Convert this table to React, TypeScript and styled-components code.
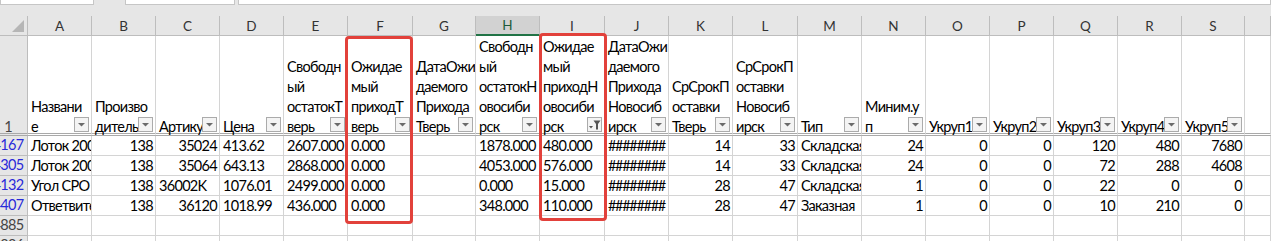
import React from "react";
import styled, { createGlobalStyle } from "styled-components";

const GlobalStyle = createGlobalStyle`
  html, body { margin: 0; padding: 0; background: #ffffff; overflow: hidden; }
  body { font-family: Lato, "Noto Sans", sans-serif; }
`;

const COL_WIDTHS = [64, 64, 64, 64, 64, 65, 63, 64, 65, 64, 64, 65, 64, 64, 64, 64, 64, 64, 63];
const LETTERS = "ABCDEFGHIJKLMNOPQRS".split("");
const GRID_TEMPLATE = `28px ${COL_WIDTHS.map((w) => `${w}px`).join(" ")} 1fr`;

const GRID = "#d4d4d4";
const HEAD_LINE = "#bdbdbd";
const HEAD_BG = "#e6e6e6";

const Page = styled.div`
  position: relative;
  width: 1271px;
  height: 241px;
  overflow: hidden;
  background: #ffffff;
`;

const TopBand = styled.div`
  display: flex;
  align-items: flex-start;
  height: 16px;
  background: ${HEAD_BG};
`;

const BarBox = styled.div<{ $w?: number; $gap?: number }>`
  box-sizing: border-box;
  height: 5px;
  width: ${(p) => (p.$w ? `${p.$w}px` : "auto")};
  flex: ${(p) => (p.$w ? "0 0 auto" : "1 1 auto")};
  margin-left: ${(p) => p.$gap ?? 0}px;
  background: #ffffff;
  border: 1px solid #c6c6c6;
  border-top: none;
`;

const Sheet = styled.div`
  display: grid;
  grid-template-columns: ${GRID_TEMPLATE};
  grid-template-rows: 20px 100px;
  grid-auto-rows: 20px;
  font-size: 14.5px;
  letter-spacing: -0.7px;
  color: #000000;
`;

const Corner = styled.div`
  box-sizing: border-box;
  background: ${HEAD_BG};
  border-right: 1px solid ${HEAD_LINE};
  border-bottom: 1px solid ${HEAD_LINE};
  display: flex;
  align-items: flex-end;
  justify-content: flex-end;
  padding: 0 3px 3px 0;
`;

const ColHead = styled.div<{ $active?: boolean }>`
  box-sizing: border-box;
  background: ${(p) => (p.$active ? "#d2d2d2" : HEAD_BG)};
  border-right: 1px solid ${HEAD_LINE};
  border-bottom: ${(p) => (p.$active ? "2px solid #217346" : `1px solid ${HEAD_LINE}`)};
  display: flex;
  align-items: center;
  justify-content: center;
  font-size: 13.5px;
  letter-spacing: 0;
  line-height: 18px;
  color: ${(p) => (p.$active ? "#1f5c3a" : "#333333")};
`;

const RowHead = styled.div<{ $tall?: boolean; $blue?: boolean }>`
  box-sizing: border-box;
  background: ${HEAD_BG};
  border-right: 1px solid ${HEAD_LINE};
  border-bottom: ${(p) => (p.$tall ? `3px double #a9a9a9` : `1px solid ${HEAD_LINE}`)};
  display: flex;
  justify-content: flex-end;
  align-items: flex-end;
  overflow-x: clip;
  line-height: 20px;
  color: ${(p) => (p.$blue ? "#2929d9" : "#444444")};
`;

const RowNum = styled.span<{ $tall?: boolean }>`
  flex: 0 0 38px;
  text-align: center;
  white-space: nowrap;
  margin-bottom: ${(p) => (p.$tall ? "-4px" : "0")};
`;

const HeadCell = styled.div`
  position: relative;
  box-sizing: border-box;
  border-right: 1px solid ${GRID};
  border-bottom: 3px double #a9a9a9;
  display: flex;
  flex-direction: column;
  justify-content: flex-end;
  padding: 0 0 0 3px;
  overflow-x: clip;
`;

const HeadText = styled.div`
  margin-bottom: -4px;
  line-height: 20px;
  white-space: nowrap;
`;

const FilterBtn = styled.div`
  position: absolute;
  right: 2px;
  bottom: 1px;
  box-sizing: border-box;
  width: 15px;
  height: 15px;
  border: 1px solid #ababab;
  background: #f4f4f4;
  display: flex;
  align-items: center;
  justify-content: center;
`;

const Cell = styled.div<{ $right?: boolean }>`
  box-sizing: border-box;
  border-right: 1px solid ${GRID};
  border-bottom: 1px solid ${GRID};
  padding: 0 2px 0 3px;
  line-height: 20px;
  white-space: nowrap;
  overflow: hidden;
  text-align: ${(p) => (p.$right ? "right" : "left")};
`;

const Hashes = styled.span`
  letter-spacing: -1.3px;
`;

const Highlight = styled.div<{ $left: number; $top: number }>`
  position: absolute;
  left: ${(p) => p.$left}px;
  top: ${(p) => p.$top}px;
  width: 68px;
  height: 188px;
  box-sizing: border-box;
  border: 3px solid #e2413b;
  border-radius: 4px;
  pointer-events: none;
`;

type Header = { lines: string[]; active?: boolean };

const HEADERS: Header[] = [
  { lines: ["Названи", "е"] },
  { lines: ["Произво", "дитель"] },
  { lines: ["Артикул"] },
  { lines: ["Цена"] },
  { lines: ["Свободн", "ый", "остатокТ", "верь"] },
  { lines: ["Ожидае", "мый", "приходТ", "верь"] },
  { lines: ["ДатаОжи", "даемого", "Прихода", "Тверь"] },
  { lines: ["Свободн", "ый", "остатокН", "овосиби", "рск"] },
  { lines: ["Ожидае", "мый", "приходН", "овосиби", "рск"], active: true },
  { lines: ["ДатаОжи", "даемого", "Прихода", "Новосиб", "ирск"] },
  { lines: ["СрСрокП", "оставки", "Тверь"] },
  { lines: ["СрСрокП", "оставки", "Новосиб", "ирск"] },
  { lines: ["Тип"] },
  { lines: ["Миним.у", "п"] },
  { lines: ["Укруп1"] },
  { lines: ["Укруп2"] },
  { lines: ["Укруп3"] },
  { lines: ["Укруп4"] },
  { lines: ["Укруп5"] },
];

type Val = string | number | null;
type Row = { num: string; blue: boolean; cells: Val[] };

const HASH = "#HASH#";

const ROWS: Row[] = [
  {
    num: "4167",
    blue: true,
    cells: ["Лоток 200х50", 138, 35024, "413.62", "2607.000", "0.000", null, "1878.000", "480.000", HASH, 14, 33, "Складская", 24, 0, 0, 120, 480, 7680],
  },
  {
    num: "4305",
    blue: true,
    cells: ["Лоток 200х80", 138, 35064, "643.13", "2868.000", "0.000", null, "4053.000", "576.000", HASH, 14, 33, "Складская", 24, 0, 0, 72, 288, 4608],
  },
  {
    num: "4132",
    blue: true,
    cells: ["Угол СРО", 138, "36002K", "1076.01", "2499.000", "0.000", null, "0.000", "15.000", HASH, 28, 47, "Складская", 1, 0, 0, 22, 0, 0],
  },
  {
    num: "4407",
    blue: true,
    cells: ["Ответвитель", 138, 36120, "1018.99", "436.000", "0.000", null, "348.000", "110.000", HASH, 28, 47, "Заказная", 1, 0, 0, 10, 210, 0],
  },
  { num: "4885", blue: false, cells: Array(19).fill(null) },
  { num: "4886", blue: false, cells: Array(19).fill(null) },
];

const SelectAll = () => (
  <svg width="12" height="12" viewBox="0 0 12 12">
    <polygon points="12,0 12,12 0,12" fill="#b6b6b6" />
  </svg>
);

const DropArrow = () => (
  <svg width="13" height="13" viewBox="0 0 13 13">
    <polygon points="3,5 10,5 6.5,8.5" fill="#6b6b6b" />
  </svg>
);

const FilterActive = () => (
  <svg width="13" height="13" viewBox="0 0 13 13">
    <polygon points="1,8 5,8 3,10.5" fill="#555555" />
    <polygon points="5.5,2.5 12.5,2.5 10,6 10,11.5 8,11.5 8,6" fill="#555555" />
  </svg>
);

export default function App() {
  return (
    <>
      <GlobalStyle />
      <Page>
        <TopBand>
          <BarBox $w={94} />
          <BarBox $w={110} $gap={31} />
          <BarBox $gap={3} />
        </TopBand>
        <Sheet>
          <Corner>
            <SelectAll />
          </Corner>
          {LETTERS.map((l) => (
            <ColHead key={l} $active={l === "H"}>
              {l}
            </ColHead>
          ))}
          <ColHead />

          <RowHead $tall>
            <RowNum $tall>1</RowNum>
          </RowHead>
          {HEADERS.map((h, i) => (
            <HeadCell key={i}>
              <HeadText>
                {h.lines.map((line, j) => (
                  <div key={j}>{line}</div>
                ))}
              </HeadText>
              <FilterBtn>{h.active ? <FilterActive /> : <DropArrow />}</FilterBtn>
            </HeadCell>
          ))}
          <HeadCell />

          {ROWS.map((r) => (
            <React.Fragment key={r.num}>
              <RowHead $blue={r.blue}>
                <RowNum>{r.num}</RowNum>
              </RowHead>
              {r.cells.map((v, i) => (
                <Cell key={i} $right={typeof v === "number"}>
                  {v === HASH ? <Hashes>########</Hashes> : v}
                </Cell>
              ))}
              <Cell />
            </React.Fragment>
          ))}
        </Sheet>
        <Highlight $left={345} $top={36} />
        <Highlight $left={539} $top={33} />
      </Page>
    </>
  );
}
